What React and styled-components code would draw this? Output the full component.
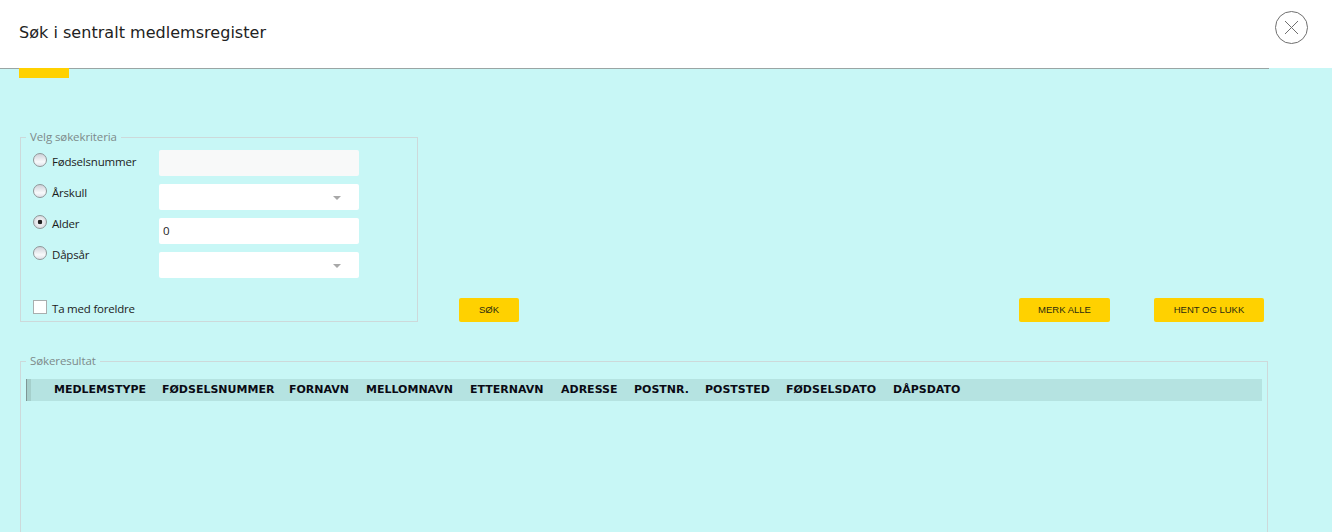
import React from 'react'
import styled, { createGlobalStyle } from 'styled-components'

const GlobalStyle = createGlobalStyle`
    html, body {
        margin: 0;
        height: 100%;
        overflow: hidden;
        background: #c8f7f6;
    }
    * {
        box-sizing: border-box;
    }
`;

const Page = styled.div`
    width: 1332px;
    height: 532px;
    overflow: hidden;
    background: #c8f7f6;
`;

const Header = styled.header`
    display: flex;
    justify-content: space-between;
    height: 68px;
    background: #fff;
`;

const Title = styled.h1`
    margin: 23px 0 0 19px;
    font: 400 16px/20px "DejaVu Sans", Verdana, sans-serif;
    letter-spacing: 0.03px;
    color: #222;
`;

const CloseButton = styled.button`
    width: 33px;
    height: 33px;
    margin: 11px 24px 0 0;
    padding: 0;
    border: 0;
    background: none;
`;

const Content = styled.main`
    width: 1269px;
    border-top: 1px solid #9aa5a4;
`;

const ActiveTab = styled.div`
    width: 50px;
    height: 10px;
    margin: -1px 0 0 19px;
    background: #ffd100;
`;

const SearchArea = styled.div`
    display: flex;
    align-items: flex-end;
    margin: 51px 0 0 20px;
`;

const Group = styled.fieldset`
    margin: 0;
    padding: 0;
    min-width: 0;
    border: 1px solid #cdd9da;
`;

const GroupLegend = styled.legend`
    margin-left: 5px;
    padding: 0 4px;
    font: 400 11.5px/16px "Open Sans", sans-serif;
    letter-spacing: -0.1px;
    color: #7d8a8a;
`;

const CriteriaGroup = styled(Group)`
    width: 398px;
    height: 193px;
`;

const CriteriaBody = styled.div`
    padding: 5px 12px 0;
`;

const CriteriaRows = styled.div`
    display: flex;
    height: 128px;
`;

const RadioColumn = styled.div`
    display: flex;
    flex-direction: column;
    gap: 13px;
    width: 126px;
    padding-top: 3px;
`;

const OptionLabel = styled.label`
    display: flex;
    align-items: center;
    gap: 5px;
    height: 18px;
    font: 400 11.5px/18px "Open Sans", sans-serif;
    letter-spacing: -0.2px;
    color: #1c1c1c;
`;

const Radio = styled.input.attrs({ type: 'radio', name: 'criteria' })`
    appearance: none;
    flex: none;
    width: 14px;
    height: 14px;
    margin: -4px 0 0;
    border: 1px solid #8f9698;
    border-radius: 50%;
    background: ${({ checked }) => checked
        ? 'radial-gradient(circle, #222 0 2px, #f0f1f4 2.6px, #c9ccd3 100%)'
        : 'linear-gradient(#cfd2d9, #f8f9fb 65%, #dfe2e9)'};
`;

const CheckBox = styled.input.attrs({ type: 'checkbox' })`
    appearance: none;
    flex: none;
    width: 14px;
    height: 14px;
    margin: -4px 0 0;
    border: 1px solid #a9aeae;
    background: #fff;
`;

const FieldColumn = styled.div`
    display: flex;
    flex-direction: column;
    gap: 8px;
    width: 200px;
`;

const TextField = styled.input`
    width: 200px;
    height: 26px;
    padding: 0 4px;
    border: 0;
    border-radius: 2px;
    outline: none;
    background: ${({ disabled }) => disabled ? '#f8f9f9' : '#fff'};
    font: 400 11.5px/26px "Open Sans", sans-serif;
    color: #1c1c1c;
`;

const Dropdown = styled.div`
    display: flex;
    align-items: center;
    justify-content: flex-end;
    width: 200px;
    height: 26px;
    padding-right: 18px;
    border-radius: 2px;
    background: #fff;
`;

const DropdownArrow = styled.span`
    width: 0;
    height: 0;
    margin-top: 1px;
    border-top: 4px solid #a8a8a8;
    border-left: 4px solid transparent;
    border-right: 4px solid transparent;
`;

const ParentsOption = styled(OptionLabel)`
    margin-top: 22px;
`;

const ActionButton = styled.button`
    width: ${({ $width }) => $width}px;
    height: 24px;
    margin-left: ${({ $offset }) => $offset}px;
    padding: 0;
    border: 0;
    border-radius: 2px;
    background: #ffd100;
    font: 400 9.5px/24px "Liberation Sans", Arial, sans-serif;
    color: #2c2c10;
`;

const ResultGroup = styled(Group)`
    width: 1248px;
    height: 300px;
    margin: 31px 0 0 20px;
`;

const ResultHeader = styled.div`
    display: flex;
    align-items: center;
    height: 22px;
    margin: 10px 5px 0;
    padding-left: 23px;
    border-left: 1px solid #7f9594;
    background: linear-gradient(to right, #a5cfcb 4px, #b5e3e1 4px);
`;

const ColumnTitle = styled.div`
    flex: none;
    width: ${({ $width }) => $width}px;
    padding-left: 4px;
    font: 700 11px/22px "DejaVu Sans", Verdana, sans-serif;
    color: #0a0a14;
    white-space: nowrap;
`;

const columns = [
    ['MEDLEMSTYPE', 108],
    ['FØDSELSNUMMER', 127],
    ['FORNAVN', 77],
    ['MELLOMNAVN', 104],
    ['ETTERNAVN', 91],
    ['ADRESSE', 73],
    ['POSTNR.', 71],
    ['POSTSTED', 81],
    ['FØDSELSDATO', 107],
    ['DÅPSDATO', 80],
];

const CloseIcon = () => (
    <svg width="33" height="33" viewBox="0 0 33 33" fill="none" stroke="#6f6f6f">
        <circle cx="16.5" cy="16.5" r="16" />
        <path d="M10 10l13 13M23 10L10 23" />
    </svg>
);

const App = () => (
    <Page>
        <GlobalStyle />
        <Header>
            <Title>Søk i sentralt medlemsregister</Title>
            <CloseButton aria-label="Lukk"><CloseIcon /></CloseButton>
        </Header>
        <Content>
            <ActiveTab />
            <SearchArea>
                <CriteriaGroup>
                    <GroupLegend>Velg søkekriteria</GroupLegend>
                    <CriteriaBody>
                        <CriteriaRows>
                            <RadioColumn>
                                <OptionLabel><Radio readOnly />Fødselsnummer</OptionLabel>
                                <OptionLabel><Radio readOnly />Årskull</OptionLabel>
                                <OptionLabel><Radio readOnly checked />Alder</OptionLabel>
                                <OptionLabel><Radio readOnly />Dåpsår</OptionLabel>
                            </RadioColumn>
                            <FieldColumn>
                                <TextField disabled />
                                <Dropdown><DropdownArrow /></Dropdown>
                                <TextField readOnly value="0" />
                                <Dropdown><DropdownArrow /></Dropdown>
                            </FieldColumn>
                        </CriteriaRows>
                        <ParentsOption><CheckBox readOnly />Ta med foreldre</ParentsOption>
                    </CriteriaBody>
                </CriteriaGroup>
                <ActionButton $width={60} $offset={41}>SØK</ActionButton>
                <ActionButton $width={91} $offset={500}>MERK ALLE</ActionButton>
                <ActionButton $width={110} $offset={44}>HENT OG LUKK</ActionButton>
            </SearchArea>
            <ResultGroup>
                <GroupLegend>Søkeresultat</GroupLegend>
                <ResultHeader>
                    {columns.map(([title, width]) => (
                        <ColumnTitle key={title} $width={width}>{title}</ColumnTitle>
                    ))}
                </ResultHeader>
            </ResultGroup>
        </Content>
    </Page>
);

export default App;
